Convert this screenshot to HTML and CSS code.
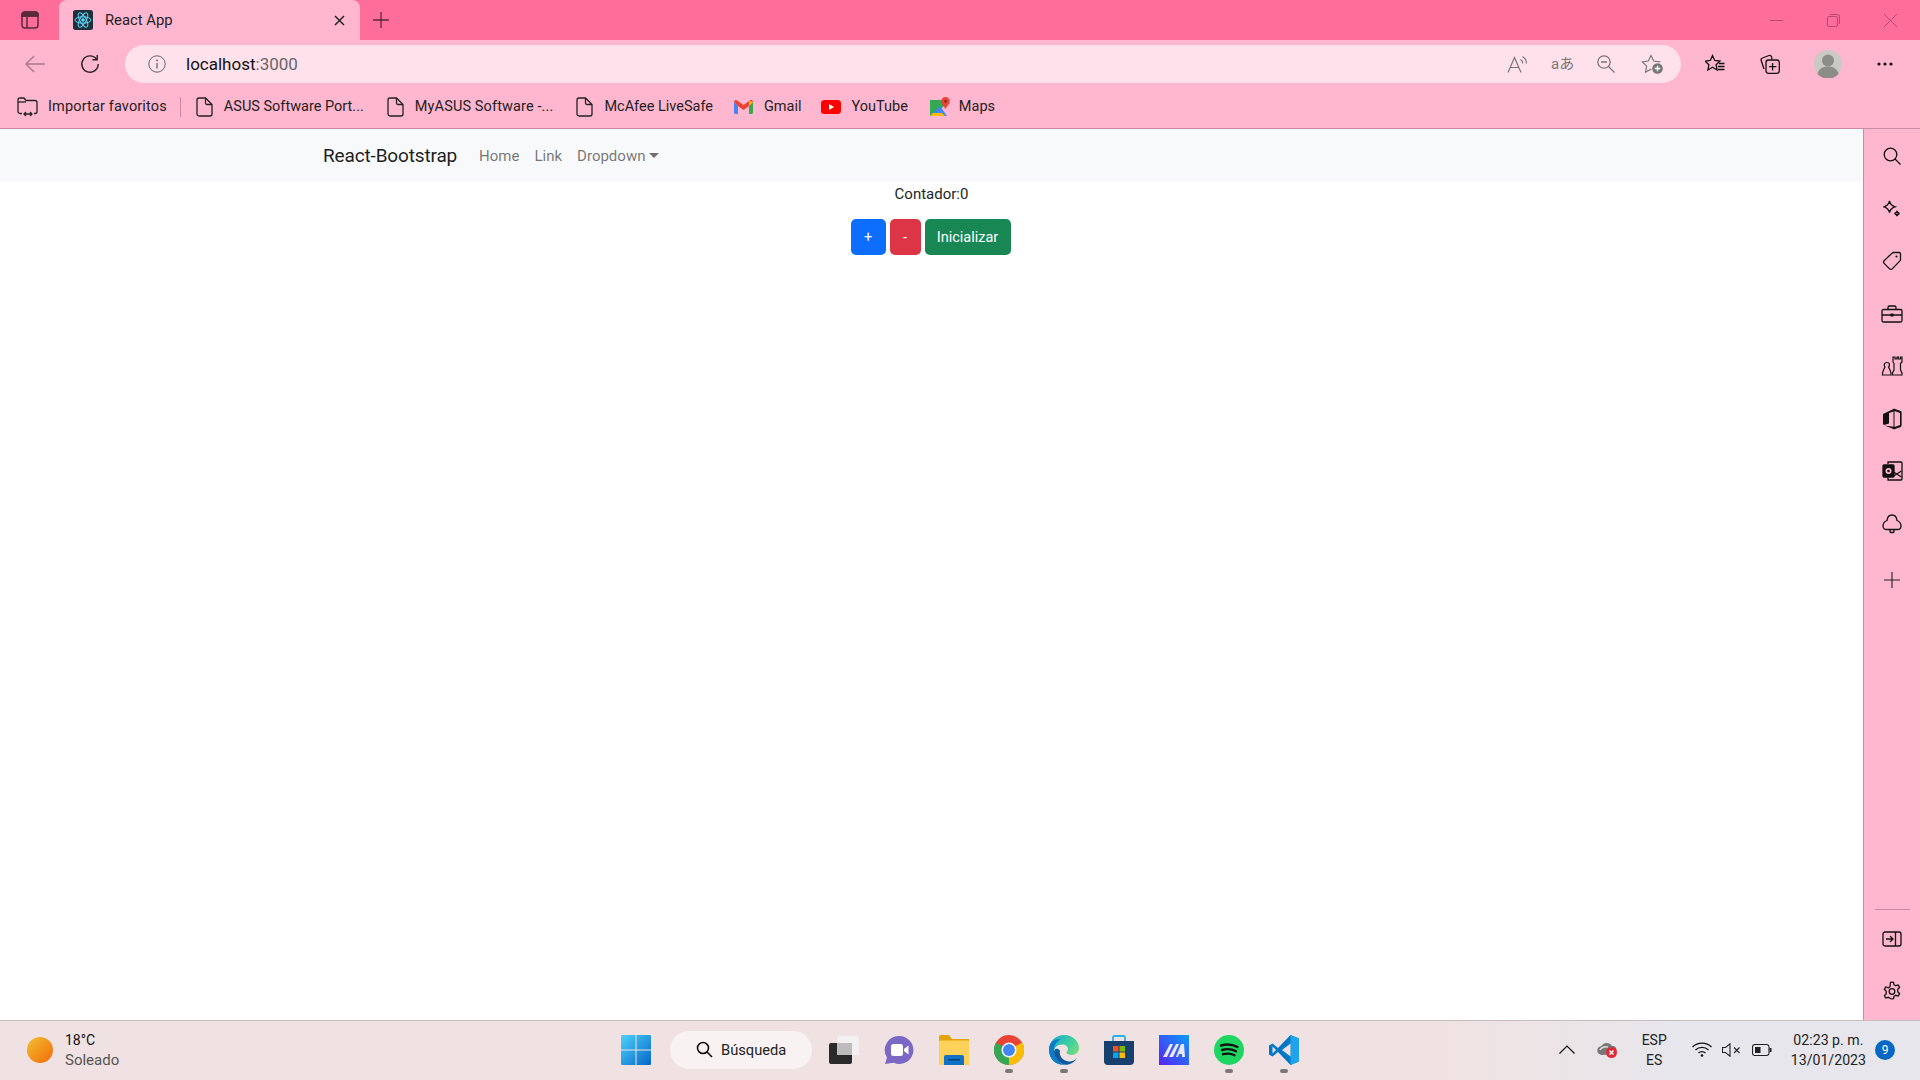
FILE: index.html
```html
<!DOCTYPE html>
<html lang="es">
<head>
  <meta charset="utf-8">
  <title>React App</title>
  <link rel="stylesheet" href="styles.css">
</head>
<body>
  <!-- tab strip -->
  <div class="tabstrip">
    <svg class="pane-icon" width="18" height="18" viewBox="0 0 18 18" fill="none" stroke="#5a2a3c" stroke-width="1.5"><rect x="1" y="1" width="16" height="16" rx="3"/><path d="M1 5h16M6 5v12"/><path d="M1 4a3 3 0 0 1 3-3h10a3 3 0 0 1 3 3v1H1z" fill="#5a2a3c"/></svg>
    <div class="tab">
      <svg class="favicon" width="20" height="20" viewBox="0 0 20 20" fill="none" stroke="#61dafb" stroke-width="1"><rect width="20" height="20" rx="2.5" fill="#20303a" stroke="none"/><circle cx="10" cy="10" r="1.8" fill="#61dafb" stroke="none"/><ellipse cx="10" cy="10" rx="8" ry="3.2"/><ellipse cx="10" cy="10" rx="8" ry="3.2" transform="rotate(60 10 10)"/><ellipse cx="10" cy="10" rx="8" ry="3.2" transform="rotate(120 10 10)"/></svg>
      <span class="tab-title">React App</span>
      <svg class="tab-close" width="11" height="11" viewBox="0 0 11 11" stroke="#222" stroke-width="1.5"><path d="M1 1l9 9M10 1l-9 9"/></svg>
    </div>
    <svg class="new-tab" width="18" height="18" viewBox="0 0 18 18" stroke="#5a2a3c" stroke-width="1.3"><path d="M9 1v16M1 9h16"/></svg>
    <div class="win-controls">
      <svg width="13" height="13" viewBox="0 0 13 13" stroke="#b24a72" stroke-width="1"><path d="M0 6.5h13"/></svg>
      <svg width="13" height="13" viewBox="0 0 13 13" fill="none" stroke="#b24a72" stroke-width="1"><rect x=".5" y="2.5" width="10" height="10" rx="1.5"/><path d="M3 .5h7.5a2 2 0 0 1 2 2V10"/></svg>
      <svg width="13" height="13" viewBox="0 0 13 13" stroke="#b24a72" stroke-width="1"><path d="M0 0l13 13M13 0L0 13"/></svg>
    </div>
  </div>

  <!-- address bar -->
  <div class="toolbar">
    <svg class="back" width="20" height="18" viewBox="0 0 20 18" fill="none" stroke="#a8798a" stroke-width="1.4"><path d="M20 9H1M9 1L1 9l8 8"/></svg>
    <svg class="reload" width="20" height="20" viewBox="0 0 20 20" fill="none" stroke="#222" stroke-width="1.4"><path d="M16.6 5.2A8.2 8.2 0 1 0 18.2 10"/><path d="M17.2 1v4.8h-4.8"/></svg>
    <div class="urlbar">
      <svg class="info" width="18" height="18" viewBox="0 0 18 18" fill="none" stroke="#666" stroke-width="1"><circle cx="9" cy="9" r="8.2"/><path d="M9 8v5.4" stroke-width="1.3"/><circle cx="9" cy="5.4" r=".9" fill="#666" stroke="none"/></svg>
      <span class="url">localhost<span class="url-port">:3000</span></span>
      <div class="url-actions">
        <svg width="20" height="18" viewBox="0 0 20 18" fill="none" stroke="#777" stroke-width="1.2"><path d="M1 17.500L7.500 2.500 14 17.500M3.300 12.500h8.400"/><path d="M13.500 4.500a4.500 4.500 0 0 1 2.300 4M15.500 1.500a8 8 0 0 1 4 7"/></svg>
        <span class="translate-icon">aあ</span>
        <svg class="zoom-icon" width="18" height="18" viewBox="0 0 18 18" fill="none" stroke="#777" stroke-width="1.3"><circle cx="7" cy="7" r="6.200"/><path d="M4 7h6M11.500 11.500l6 6"/></svg>
        <svg width="22" height="20" viewBox="0 0 22 20" fill="none" stroke="#777" stroke-width="1.2"><path d="M10 1.500l2.700 5.500 6 .9-4.300 4.200 1 6-5.400-2.800-5.400 2.800 1-6L1.300 7.900l6-.9z"/><circle cx="16.500" cy="14.500" r="6.300" fill="#ffe1ec" stroke="none"/><circle cx="16.500" cy="14.500" r="5.300" fill="#777" stroke="none"/><path d="M16.500 11.800v5.400M13.800 14.500h5.400" stroke="#fff" stroke-width="1.300"/></svg>
      </div>
    </div>
    <div class="browser-actions">
      <svg width="20" height="20" viewBox="0 0 20 20" fill="none" stroke="#111" stroke-width="1.300"><path d="M7.500 1.500l2.200 5 5.300.6-3.900 3.600 1 5.300-4.600-2.700L2.900 16l1-5.300L0 7.100l5.300-.6z"/><path d="M14 9.500h5.500M13 12.500h6.500M13 15.500h6.500"/></svg>
      <svg width="20" height="20" viewBox="0 0 20 20" fill="none" stroke="#111" stroke-width="1.3"><path d="M4 15L1.200 6.500a2 2 0 0 1 1.300-2.500L9 1.500a2 2 0 0 1 2.500 1.200L12 5"/><rect x="6" y="6" width="13.300" height="13.300" rx="2.500"/><path d="M12.600 9v7.400M9 12.700h7.400"/></svg>
      <svg class="avatar" width="28" height="28" viewBox="0 0 28 28"><circle cx="14" cy="14" r="14" fill="#c9c9c5"/><circle cx="14" cy="10.500" r="6" fill="#8c8c88"/><path d="M3.500 24c1-5 5-7.500 10.500-7.500S23.500 19 24.500 24a14 14 0 0 1-21 0z" fill="#8c8c88"/></svg>
      <svg class="more" width="16" height="4" viewBox="0 0 16 4" fill="#111"><circle cx="2" cy="2" r="1.600"/><circle cx="8" cy="2" r="1.600"/><circle cx="14" cy="2" r="1.600"/></svg>
    </div>
  </div>

  <!-- favourites -->
  <div class="favbar">
    <a class="fav fav-import">
      <svg width="21" height="20" viewBox="0 0 21 20" fill="none" stroke="#222" stroke-width="1.300"><path d="M5 16.500H3a2 2 0 0 1-2-2V3a2 2 0 0 1 2-2h4l2 2.500h9a2 2 0 0 1 2 2v9a2 2 0 0 1-2 2h-1"/><path d="M1 5h8"/><path d="M7 17h8M9 15l-2 2 2 2M13 15l2 2-2 2"/></svg>
      <span>Importar favoritos</span>
    </a>
    <i class="fav-sep"></i>
    <a class="fav">
      <svg class="doc" width="17" height="20" viewBox="0 0 17 20" fill="none" stroke="#222" stroke-width="1.300"><path d="M3 1h6.500L16 7.500V17a2 2 0 0 1-2 2H3a2 2 0 0 1-2-2V3a2 2 0 0 1 2-2z"/><path d="M9.500 1v5a1.500 1.500 0 0 0 1.500 1.500h5"/></svg>
      <span>ASUS Software Port...</span>
    </a>
    <a class="fav fav-myasus">
      <svg class="doc" width="17" height="20" viewBox="0 0 17 20" fill="none" stroke="#222" stroke-width="1.300"><path d="M3 1h6.500L16 7.500V17a2 2 0 0 1-2 2H3a2 2 0 0 1-2-2V3a2 2 0 0 1 2-2z"/><path d="M9.500 1v5a1.500 1.500 0 0 0 1.500 1.500h5"/></svg>
      <span>MyASUS Software -...</span>
    </a>
    <a class="fav">
      <svg class="doc" width="17" height="20" viewBox="0 0 17 20" fill="none" stroke="#222" stroke-width="1.300"><path d="M3 1h6.500L16 7.500V17a2 2 0 0 1-2 2H3a2 2 0 0 1-2-2V3a2 2 0 0 1 2-2z"/><path d="M9.500 1v5a1.500 1.500 0 0 0 1.500 1.500h5"/></svg>
      <span>McAfee LiveSafe</span>
    </a>
    <a class="fav fav-gmail">
      <svg width="19" height="14" viewBox="0 0 19 14"><path d="M0 2v10.500A1.500 1.500 0 0 0 1.500 14H4V6z" fill="#4285f4"/><path d="M15 6v8h2.500a1.500 1.500 0 0 0 1.500-1.500V2z" fill="#34a853"/><path d="M0 2a2 2 0 0 1 3.200-1.600L9.500 5l6.300-4.600A2 2 0 0 1 19 2l-4 4-5.500 4L4 6z" fill="#ea4335"/><path d="M15 1.100L19 2l-4 4z" fill="#fbbc04"/></svg>
      <span>Gmail</span>
    </a>
    <a class="fav fav-youtube">
      <svg width="20" height="14" viewBox="0 0 20 14"><rect width="20" height="14" rx="3.500" fill="#f00"/><path d="M8 4l5.200 3L8 10z" fill="#fff"/></svg>
      <span>YouTube</span>
    </a>
    <a class="fav fav-maps">
      <svg width="20" height="20" viewBox="0 0 20 20"><path d="M0 3h15v5L4 19H0z" fill="#34a853"/><path d="M0 19L10 9l7 10z" fill="#4285f4"/><path d="M0 19l3-3h9l3 3z" fill="#fbbc04"/><path d="M15.500 0a4.300 4.300 0 0 1 4.300 4.300c0 2.800-3 4.700-4.300 8-1.300-3.300-4.300-5.200-4.300-8A4.300 4.300 0 0 1 15.500 0z" fill="#ea4335"/><circle cx="15.500" cy="4.300" r="1.500" fill="#8e2a20"/></svg>
      <span>Maps</span>
    </a>
  </div>

  <div class="main">
    <div class="page">
      <nav class="navbar">
        <a class="brand">React-Bootstrap</a>
        <a class="nav-link">Home</a>
        <a class="nav-link">Link</a>
        <a class="nav-link dropdown">Dropdown</a>
      </nav>
      <p class="counter">Contador:0</p>
      <div class="counter-btns">
        <button class="btn btn-blue">+</button>
        <button class="btn btn-red">-</button>
        <button class="btn btn-green">Inicializar</button>
      </div>
    </div>

    <aside class="sidebar">
      <div class="side-top">
        <svg width="18" height="18" viewBox="0 0 18 18" fill="none" stroke="#111" stroke-width="1.300"><circle cx="7.500" cy="7.500" r="6.300"/><path d="M12 12l5.500 5.500"/></svg>
        <svg width="18" height="18" viewBox="0 0 18 18" fill="none" stroke="#111" stroke-width="1.300"><path d="M6.500 1c.8 3.500 2 4.800 5.500 5.800-3.500 1-4.700 2.200-5.500 5.700C5.700 9 4.500 7.800 1 6.800 4.500 5.800 5.700 4.500 6.500 1z"/><path d="M14 11c.3 1.500.9 2.100 2.500 2.500-1.600.4-2.200 1-2.500 2.500-.3-1.500-.9-2.100-2.500-2.500 1.600-.4 2.200-1 2.500-2.500z"/></svg>
        <svg width="20" height="20" viewBox="0 0 20 20" fill="none" stroke="#111" stroke-width="1.300"><path d="M11.500 1.500h5.500a1.500 1.500 0 0 1 1.500 1.500v5.500a2 2 0 0 1-.6 1.400l-7.700 8a1.800 1.800 0 0 1-2.600 0l-5.500-5.500a1.800 1.800 0 0 1 0-2.600l8-7.700a2 2 0 0 1 1.400-.6z"/><circle cx="14.500" cy="5.500" r="1.100" fill="#111" stroke="none"/></svg>
        <svg width="22" height="18" viewBox="0 0 22 18" fill="none" stroke="#111" stroke-width="1.300"><rect x="1" y="4.500" width="20" height="12.500" rx="1.500"/><path d="M7 4.500V2.500A1.500 1.500 0 0 1 8.500 1h5A1.500 1.500 0 0 1 15 2.500v2M1 10h20"/><rect x="9.500" y="8.500" width="3" height="3" fill="#111" stroke="none"/></svg>
        <svg width="22" height="20" viewBox="0 0 22 20" fill="none" stroke="#111" stroke-width="1.200"><path d="M12 1h2v2h2V1h1.500v2h2V1H21v5l-1.500 1.500v6.500l1.500 3v2h-9.500v-2l1.500-3V7.500L12 6z"/><path d="M6 6.500a2.500 2.500 0 0 1 2.500 2.500c0 1-1 2-1 2l1.500 3 1 3v2H1.500v-2l1-3L4 11s-.8-1-.8-2A2.600 2.600 0 0 1 6 6.500z"/></svg>
        <svg width="20" height="22" viewBox="0 0 20 22"><path d="M11.500 1l7 2.500a1 1 0 0 1 .5.900v13.200a1 1 0 0 1-.5.900l-7 2.500-9-3.500 9 1.300V3.500L7 5v10.500L2 17l-1-1V6z" fill="#111"/><path d="M12.500 3l5.500 2v12l-5.500 2z" fill="#ffb6cf"/><path d="M11.500 1l7 2.500a1 1 0 0 1 .5.900v13.200a1 1 0 0 1-.5.900l-7 2.500" fill="none" stroke="#111" stroke-width="1.200"/></svg>
        <svg width="21" height="20" viewBox="0 0 21 20" fill="none" stroke="#111" stroke-width="1.300"><path d="M6 3V1h13a1 1 0 0 1 1 1v16a1 1 0 0 1-1 1H6v-3"/><path d="M10 10l9.500 6M10 16l9.500-6"/><rect x="1" y="4" width="11" height="12" rx="1" fill="#111"/><circle cx="6.500" cy="10" r="3" fill="#ffb6cf" stroke="none"/><circle cx="6.500" cy="10" r="1.300" fill="#111" stroke="none"/></svg>
        <svg width="20" height="20" viewBox="0 0 20 20" fill="none" stroke="#111" stroke-width="1.300"><path d="M10 1c3 0 4.700 2.700 5 5.500 2.500 1 4 3 4 5.500 0 2-1.500 3.500-3.500 3.500h-11C2.500 15.500 1 14 1 12c0-2.500 1.500-4.500 4-5.500C5.300 3.700 7 1 10 1z"/><path d="M8 15.500v2a1 1 0 0 0 1 1h2a1 1 0 0 0 1-1v-2"/></svg>
        <svg class="side-add" width="16" height="16" viewBox="0 0 16 16" stroke="#222" stroke-width="1.100"><path d="M8 0v16M0 8h16"/></svg>
      </div>
      <div class="side-bottom">
        <i class="side-rule"></i>
        <svg width="20" height="16" viewBox="0 0 20 16" fill="none" stroke="#111" stroke-width="1.300"><rect x="1" y="1" width="18" height="14" rx="2"/><path d="M13.500 1v14M4 8h6.500M8 5l3 3-3 3"/></svg>
        <svg class="gear" width="20" height="21" viewBox="0 0 20 21" fill="none" stroke="#111" stroke-width="1.300"><circle cx="10" cy="10.500" r="2.800"/><path d="M8.500 1.300a8 8 0 0 1 3 0l.5 2.400 1.800 1 2.300-.8a9.400 9.400 0 0 1 1.500 2.600l-1.800 1.600v2.800l1.800 1.600a9.400 9.400 0 0 1-1.500 2.600l-2.300-.8-1.800 1-.5 2.400a8 8 0 0 1-3 0L8 17.300l-1.800-1-2.300.8a9.400 9.400 0 0 1-1.500-2.600l1.800-1.600V10.100L2.400 8.500a9.400 9.400 0 0 1 1.500-2.600l2.300.8 1.800-1z"/></svg>
      </div>
    </aside>
  </div>

  <!-- windows taskbar -->
  <footer class="taskbar">
    <div class="weather">
      <span class="sun"></span>
      <div class="weather-text">
        <span class="temp">18°C</span>
        <span class="sky">Soleado</span>
      </div>
    </div>
    <div class="tb-apps">
      <svg width="30" height="30" viewBox="0 0 30 30"><defs><linearGradient id="winblue" x1="0" y1="0" x2="1" y2="1"><stop offset="0" stop-color="#4cd2fb"/><stop offset="1" stop-color="#0566c8"/></linearGradient></defs><path fill="url(#winblue)" d="M1 0h13.500v14.500H0V1a1 1 0 0 1 1-1zM15.500 0H29a1 1 0 0 1 1 1v13.500H15.500zM0 15.500h14.500V30H1a1 1 0 0 1-1-1zM15.500 15.500H30V29a1 1 0 0 1-1 1H15.500z"/></svg>
      <div class="search">
        <svg width="17" height="17" viewBox="0 0 17 17" fill="none" stroke="#111" stroke-width="1.600"><circle cx="7" cy="7" r="5.500"/><path d="M11 11l5 5"/></svg>
        <span>Búsqueda</span>
      </div>
      <svg class="app" width="30" height="30" viewBox="0 0 30 30"><rect x="0" y="8" width="23" height="21" rx="2" fill="#2a2a2a"/><rect x="8" y="1" width="22" height="19" rx="2" fill="#f2f0f0"/><rect x="8" y="8" width="15" height="12" fill="#bdbbbb"/></svg>
      <svg class="app" width="30" height="30" viewBox="0 0 30 30"><path d="M15.500 1a14 14 0 1 1-6 26.700L1 29l2-6.500A14 14 0 0 1 15.500 1z" fill="#7b68c4"/><rect x="7" y="9" width="12" height="12" rx="2.500" fill="#fff"/><path d="M20 14l4.500-3.500v9L20 16z" fill="#fff"/></svg>
      <svg class="app" width="30" height="30" viewBox="0 0 30 30"><path d="M0 2a2 2 0 0 1 2-2h8l3 4h17v6H0z" fill="#e3a30b"/><rect y="5.500" width="30" height="24.500" rx="1" fill="#fdd15a"/><path d="M5 22a2 2 0 0 1 2-2h16a2 2 0 0 1 2 2v8H5z" fill="#0f72c4"/><rect x="9" y="24" width="12" height="1.500" fill="#063f78"/></svg>
      <div class="app-wrap running">
        <svg class="app" width="30" height="30" viewBox="0 0 30 30"><circle cx="15" cy="15" r="15" fill="#ea4335"/><path d="M15 15L28 7.500A15 15 0 0 1 15 30z" fill="#fbbc04"/><path d="M15 15L15 30A15 15 0 0 1 2 7.500z" fill="#34a853"/><circle cx="15" cy="15" r="7.500" fill="#fff"/><circle cx="15" cy="15" r="6" fill="#4285f4"/></svg>
      </div>
      <div class="app-wrap running">
        <svg class="app" width="30" height="30" viewBox="0 0 30 30"><defs><linearGradient id="edgeg" x1="0" y1="0" x2="1" y2=".8"><stop offset="0" stop-color="#19a6d8"/><stop offset=".55" stop-color="#3fd0a0"/><stop offset="1" stop-color="#8fe070"/></linearGradient></defs><path d="M15 0c9 0 15 6.500 15 13 0 4-3 7-7.500 7-3 0-5-1-5-2.500 0-1 1.500-1.500 1.500-3.500 0-2.500-2.500-4.500-5.500-4.500C8 9.500 5 13 5 17c0 6 5 11 11 12.800C7 30.500 0 24 0 15 0 6.500 6.500 0 15 0z" fill="url(#edgeg)"/><path d="M0 15C0 6.500 6.500 3 12 4.500 7 6.500 4.500 11 5 17c.5 6 5 11 11 12.800C7 30.500 0 24 0 15z" fill="#0c7bc9"/><path d="M11 15.500c-1.500 6 4 11.500 10 11 3-.3 5.500-1.500 7-3.500-2.500 4.500-7 7-12 6.800-6-1.800-11-7-11-12.800 0-2.500 2.500-5 6-1.500z" fill="#0e5a9e"/></svg>
      </div>
      <svg class="app" width="30" height="30" viewBox="0 0 30 30"><path d="M9 6V2.500a1.500 1.500 0 0 1 1.500-1.500h9A1.500 1.500 0 0 1 21 2.500V6" fill="none" stroke="#28b0e8" stroke-width="1.800"/><path d="M0 6h30v20a4 4 0 0 1-4 4H4a4 4 0 0 1-4-4z" fill="#17406f"/><rect x="9" y="11" width="5.500" height="5.500" fill="#f25022"/><rect x="15.500" y="11" width="5.500" height="5.500" fill="#7fba00"/><rect x="9" y="17.500" width="5.500" height="5.500" fill="#00a4ef"/><rect x="15.500" y="17.500" width="5.500" height="5.500" fill="#ffb900"/></svg>
      <svg class="app" width="30" height="30" viewBox="0 0 30 30"><defs><linearGradient id="mag" x1="0" y1="1" x2="1" y2="0"><stop offset="0" stop-color="#5a22f5"/><stop offset="1" stop-color="#0a9cf5"/></linearGradient></defs><rect width="30" height="30" fill="url(#mag)"/><path d="M4 22L11 9h3L8 22zM10 22l7-13h3l-6 13zM17 22l5-13h3l1 13h-3v-3h-3l-1 3z" fill="#e9e5fc"/></svg>
      <div class="app-wrap running">
        <svg class="app" width="30" height="30" viewBox="0 0 30 30"><circle cx="15" cy="15" r="15" fill="#1ed760"/><path d="M7 10.500c5.500-1.600 11.500-1.200 16.500 1.500M8 15c4.500-1.300 10-1 14 1.300M9 19.200c4-1 8-.8 11.500 1" fill="none" stroke="#111" stroke-width="2.400" stroke-linecap="round"/></svg>
      </div>
      <div class="app-wrap running">
        <svg class="app" width="30" height="30" viewBox="0 0 30 30"><path d="M21.500 0L30 3.500v23L21.500 30 9 17l-5.500 4.500L0 19.500v-9L3.500 8.500 9 13z" fill="#0078c8"/><path d="M21.500 0L30 3.500v23L21.500 30z" fill="#1fa3ec"/><path d="M21.500 8.500L13 15l8.500 6.500z" fill="#f0e2e2"/><path d="M3.500 11.500v7L7 15z" fill="#f0e2e2"/></svg>
      </div>
    </div>
    <div class="tray">
      <svg width="16" height="9" viewBox="0 0 16 9" fill="none" stroke="#111" stroke-width="1.200"><path d="M.5 8.500L8 1l7.500 7.500"/></svg>
      <svg class="cloud" width="20" height="17" viewBox="0 0 20 17"><path d="M5 14a4.500 4.500 0 0 1-.5-9A6 6 0 0 1 15 5a4 4 0 0 1 1 8z" fill="#777"/><path d="M3 9c1-2.500 5-4 8-3" stroke="#ddd" stroke-width="1.500" fill="none"/><circle cx="14.500" cy="11.500" r="5.500" fill="#e02a35"/><path d="M12.500 9.500l4 4M16.500 9.500l-4 4" stroke="#fff" stroke-width="1.400"/></svg>
      <div class="lang"><span>ESP</span><span>ES</span></div>
      <svg class="wifi" width="20" height="15" viewBox="0 0 20 15" fill="none" stroke="#111" stroke-width="1.200"><path d="M.5 5a13.500 13.500 0 0 1 19 0M3.500 8a9.500 9.500 0 0 1 13 0M6.500 11a5 5 0 0 1 7 0"/><circle cx="10" cy="13.500" r="1.300" fill="#111" stroke="none"/></svg>
      <svg class="speaker" width="19" height="14" viewBox="0 0 19 14" fill="none" stroke="#222" stroke-width="1.100"><path d="M.5 4.500h3L8 .8v12.400l-4.500-3.700h-3z"/><path d="M12 4.500l5.500 5.500M17.500 4.500L12 10"/></svg>
      <svg class="battery" width="20" height="12" viewBox="0 0 20 12" fill="none" stroke="#222" stroke-width="1.100"><rect x=".5" y=".5" width="16.500" height="11" rx="2.500"/><rect x="3" y="3" width="5.500" height="6" fill="#222" stroke="none"/><path d="M18.500 4v4" stroke-width="2"/></svg>
      <div class="clock"><span>02:23 p. m.</span><span>13/01/2023</span></div>
      <span class="badge">9</span>
    </div>
  </footer>
</body>
</html>
```

FILE: styles.css
```css
* {
    box-sizing: border-box;
}

html,
body {
    margin: 0;
    height: 100%;
}

body {
    display: flex;
    flex-direction: column;
    height: 100vh;
    overflow: hidden;
    font-family: Roboto, "Noto Sans", sans-serif;
    color: #212529;
    background: #fff;
}

svg {
    display: block;
    flex: none;
}

/* tab strip */
.tabstrip {
    display: flex;
    align-items: center;
    height: 40px;
    padding-left: 21px;
    background: #ff6d9b;
}

.tab {
    display: flex;
    align-items: center;
    align-self: flex-end;
    width: 301px;
    height: 40px;
    margin-left: 20px;
    padding: 0 14px;
    background: #ffb6cf;
    border-radius: 8px 8px 0 0;
}

.tab-title {
    margin-left: 12px;
    font-size: 14.800px;
    color: #222;
}

.tab-close {
    margin-left: auto;
    margin-right: 1px;
}

.new-tab {
    margin-left: 12px;
}

.win-controls {
    display: flex;
    gap: 44px;
    margin-left: auto;
    padding-right: 23px;
}

/* address bar */
.toolbar {
    display: flex;
    align-items: center;
    height: 49px;
    padding: 0 27px 1px 25px;
    background: #ffb6cf;
}

.reload {
    margin-left: 35px;
}

.urlbar {
    display: flex;
    align-items: center;
    width: 1556px;
    height: 38px;
    margin-left: 25px;
    padding: 0 18px 0 23px;
    background: #ffe1ec;
    border-radius: 19px;
}

.url {
    margin-left: 20px;
    font-size: 17px;
    color: #111;
}

.url-port {
    color: #666;
}

.url-actions {
    display: flex;
    align-items: center;
    gap: 24px;
    margin-left: auto;
}

.translate-icon {
    width: 25px;
    margin-right: -3px;
    font-family: Roboto, "Noto Sans CJK JP", sans-serif;
    font-size: 15px;
    line-height: 18px;
    white-space: nowrap;
    color: #777;
}

.zoom-icon {
    margin-right: 2px;
}

.browser-actions {
    display: flex;
    align-items: center;
    margin-left: auto;
}

.browser-actions svg:nth-child(2) {
    margin-left: 35px;
}

.avatar {
    margin-left: 34px;
}

.more {
    margin-left: 35px;
}

/* favourites */
.favbar {
    display: flex;
    align-items: center;
    gap: 23px;
    height: 40px;
    padding: 0 0 4px 17px;
    background: #ffb6cf;
    border-bottom: 1px solid #c98aa3;
}

.fav {
    display: flex;
    align-items: center;
    gap: 11px;
    font-size: 14.500px;
    color: #222;
}

.fav-import {
    gap: 10px;
    letter-spacing: .14px;
}

.fav-myasus {
    letter-spacing: .12px;
}

.fav-gmail {
    margin-left: -2px;
}

.fav-youtube {
    margin-left: -4px;
}

.fav-maps {
    gap: 9px;
    margin-left: -1px;
}

.fav-sep {
    width: 1px;
    height: 20px;
    margin: 0 -8px 0 -10px;
    background: #c98aa3;
}

/* page */
.main {
    flex: 1;
    display: flex;
    min-height: 0;
}

.page {
    flex: 1;
    min-width: 0;
    background: #fff;
}

.navbar {
    display: flex;
    align-items: center;
    height: 53px;
    padding-left: 323px;
    background: #f8f9fa;
}

.brand {
    margin-right: 22px;
    font-size: 19px;
    letter-spacing: -.15px;
    color: rgba(0, 0, 0, .9);
}

.nav-link {
    margin-right: 15px;
    font-size: 15px;
    color: rgba(0, 0, 0, .55);
}

.dropdown::after {
    content: "";
    display: inline-block;
    margin-left: 4px;
    vertical-align: 3px;
    border-top: 5px solid;
    border-left: 5px solid transparent;
    border-right: 5px solid transparent;
}

.counter {
    margin: 0 0 13px;
    font-size: 15px;
    line-height: 24px;
    text-align: center;
}

.counter-btns {
    display: flex;
    justify-content: center;
    gap: 4px;
    padding-right: 2px;
}

.btn {
    height: 36px;
    padding: 0 12px;
    font-family: inherit;
    font-size: 14.500px;
    color: #fff;
    border: 0;
    border-radius: 5px;
}

.btn-blue {
    width: 35px;
    background: #0d6efd;
}

.btn-red {
    width: 31px;
    background: #dc3545;
}

.btn-green {
    width: 86px;
    padding: 0;
    background: #198754;
}

/* edge sidebar */
.sidebar {
    display: flex;
    flex-direction: column;
    justify-content: space-between;
    align-items: center;
    width: 57px;
    padding: 1px 0 18px;
    background: #ffb6cf;
    border-left: 1px solid #c98aa3;
}

.side-top {
    display: grid;
    grid-auto-rows: 52.500px;
    place-items: center;
}

.side-add {
    margin-top: 7px;
}

.side-bottom {
    display: flex;
    flex-direction: column;
    align-items: center;
    gap: 21px;
}

.side-rule {
    width: 35px;
    height: 1px;
    background: #c98aa3;
}

.gear {
    margin-top: 13px;
}

/* taskbar */
.taskbar {
    display: grid;
    grid-template-columns: 1fr auto 1fr;
    align-items: center;
    height: 60px;
    padding-bottom: 2px;
    background: linear-gradient(90deg, #f0e2e2 0%, #f0e2e2 75%, #e6e6ec 88%);
    border-top: 1px solid #c8bcbc;
}

.weather {
    display: flex;
    align-items: center;
    padding-left: 27px;
}

.sun {
    width: 26px;
    height: 26px;
    background: linear-gradient(135deg, #f0c030, #f56a0a);
    border-radius: 50%;
}

.weather-text {
    display: flex;
    flex-direction: column;
    margin-left: 12px;
    font-size: 14px;
    line-height: 20px;
}

.temp {
    color: #111;
}

.sky {
    font-size: 15px;
    color: #555;
}

.tb-apps {
    display: flex;
    align-items: center;
    gap: 25px;
}

.search {
    display: flex;
    align-items: center;
    gap: 8px;
    width: 142px;
    height: 38px;
    margin-left: -6px;
    padding-left: 26px;
    font-size: 14.700px;
    color: #222;
    background: #f8f2f2;
    border-radius: 19px;
}

.search + .app {
    margin-left: -8px;
}

.app-wrap {
    position: relative;
}

.running::after {
    content: "";
    position: absolute;
    left: 11px;
    bottom: -8px;
    width: 8px;
    height: 4px;
    background: #7d7878;
    border-radius: 2px;
}

.tray {
    display: flex;
    align-items: center;
    justify-content: flex-end;
    padding-right: 25px;
    font-size: 14px;
    color: #222;
}

.cloud {
    margin-left: 22px;
}

.lang,
.clock {
    display: flex;
    flex-direction: column;
    align-items: center;
    line-height: 20px;
}

.lang {
    margin: 0 25px 0 25px;
}

.speaker {
    margin-left: 10px;
}

.battery {
    margin-left: 11px;
}

.clock {
    margin-left: 19px;
    font-size: 14.150px;
}

.badge {
    display: flex;
    justify-content: center;
    align-items: center;
    width: 20px;
    height: 20px;
    margin-left: 9px;
    font-size: 12px;
    color: #fff;
    background: #0767c4;
    border-radius: 50%;
}
```
